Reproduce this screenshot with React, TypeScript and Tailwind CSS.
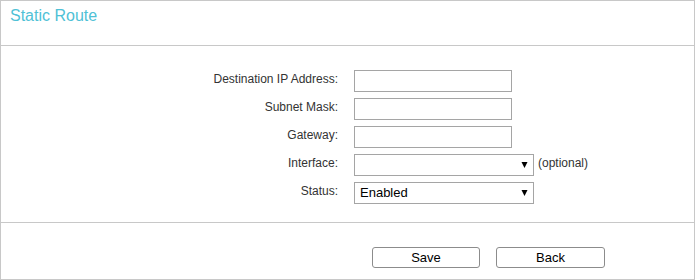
import React from 'react';

function Arrow() {
  return (
    <svg
      width="7"
      height="6"
      viewBox="0 0 7 6"
      className="pointer-events-none absolute right-[6px] top-[8px]"
    >
      <path d="M0.5 0h6L3.5 6z" fill="#000" />
    </svg>
  );
}

function Row({ label, children }: { label: string; children: React.ReactNode }) {
  return (
    <div className="flex items-start h-[22px]">
      <label className="w-[337px] pt-[2px] text-right text-[12px] leading-[14px] text-[#333]">
        {label}
      </label>
      <div className="ml-[16px] flex items-start">{children}</div>
    </div>
  );
}

function TextBox() {
  return (
    <input
      type="text"
      className="block h-[22px] w-[158px] border border-[#a5a5a5] bg-white px-1 text-[12px] outline-none"
    />
  );
}

function Select({ value, width }: { value: string; width: string }) {
  return (
    <div className={`relative h-[22px] ${width}`}>
      <select
        defaultValue={value}
        className="block h-[22px] w-full appearance-none rounded-none border border-[#a5a5a5] bg-white pl-[5px] text-[13px] leading-[20px] text-black outline-none"
      >
        <option value=""></option>
        <option value="Enabled">Enabled</option>
        <option value="Disabled">Disabled</option>
      </select>
      <Arrow />
    </div>
  );
}

export default function App() {
  return (
    <div
      className="w-[695px] h-[280px] border border-[#c8c8c8] bg-white"
      style={{ fontFamily: '"Liberation Sans", Arial, sans-serif' }}
    >
      <div className="h-[45px] border-b border-[#c8c8c8] pl-[9px] pt-[5px]">
        <h1 className="text-[16px] leading-[20px] text-[#4fc1d6]">Static Route</h1>
      </div>

      <div className="h-[177px] border-b border-[#c8c8c8] pt-[24px] flex flex-col gap-[6px]">
        <Row label="Destination IP Address:">
          <TextBox />
        </Row>
        <Row label="Subnet Mask:">
          <TextBox />
        </Row>
        <Row label="Gateway:">
          <TextBox />
        </Row>
        <Row label="Interface:">
          <Select value="" width="w-[180px]" />
          <span className="ml-[4px] pt-[2px] text-[12px] leading-[14px] text-[#333]">(optional)</span>
        </Row>
        <Row label="Status:">
          <Select value="Enabled" width="w-[180px]" />
        </Row>
      </div>

      <div className="flex gap-[16px] pl-[371px] pt-[24px]">
        <button className="h-[21px] w-[108px] rounded-[3px] border border-[#8c8c8c] bg-white text-[13px] leading-[19px] text-black">
          Save
        </button>
        <button className="h-[21px] w-[109px] rounded-[3px] border border-[#8c8c8c] bg-white text-[13px] leading-[19px] text-black">
          Back
        </button>
      </div>
    </div>
  );
}
